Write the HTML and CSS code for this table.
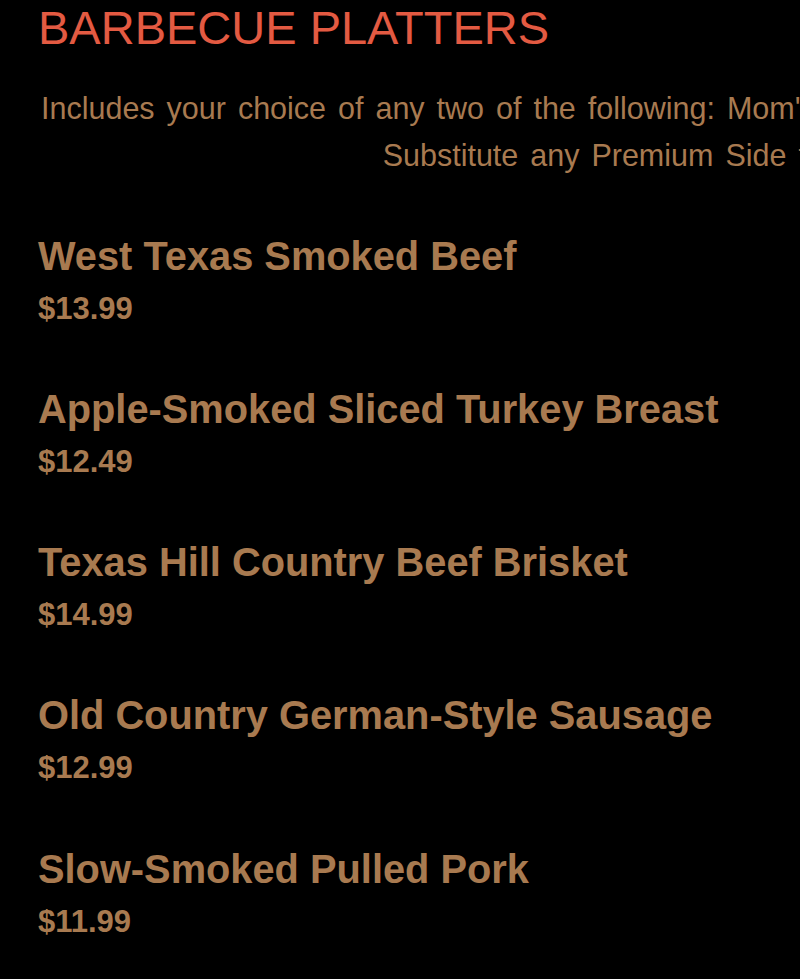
FILE: index.html
```html
<!DOCTYPE html>
<html lang="en">
<head>
<meta charset="utf-8">
<title>Barbecue Platters</title>
<link rel="stylesheet" href="styles.css">
</head>
<body>
<main class="menu">
  <h1 class="title">BARBECUE PLATTERS</h1>
  <p class="intro">Includes your choice of any two of the following: Mom's Potato Salad, Cole Slaw, Pinto Beans<br>Substitute any Premium Side for $1.99 more.</p>
  <section class="items">
    <div class="item">
      <h2 class="item-name">West Texas Smoked Beef</h2>
      <div class="item-price">$13.99</div>
    </div>
    <div class="item">
      <h2 class="item-name">Apple-Smoked Sliced Turkey Breast</h2>
      <div class="item-price">$12.49</div>
    </div>
    <div class="item">
      <h2 class="item-name">Texas Hill Country Beef Brisket</h2>
      <div class="item-price">$14.99</div>
    </div>
    <div class="item">
      <h2 class="item-name">Old Country German-Style Sausage</h2>
      <div class="item-price">$12.99</div>
    </div>
    <div class="item">
      <h2 class="item-name">Slow-Smoked Pulled Pork</h2>
      <div class="item-price">$11.99</div>
    </div>
  </section>
</main>
</body>
</html>
```

FILE: styles.css
```css
html, body {
  overflow: hidden;
}

body {
  margin: 0;
  background: #000;
  font-family: "Liberation Sans", Arial, sans-serif;
  color: #a87a50;
}

.menu {
  padding: 2.4px 38px 0;
}

.title {
  margin: 0;
  font-size: 47px;
  line-height: 52px;
  font-weight: normal;
  color: #e35a42;
}

.intro {
  margin: 30.2px 0 0 3px;
  width: max-content;
  white-space: nowrap;
  text-align: center;
  font-size: 30.5px;
  line-height: 47px;
  word-spacing: 3.5px;
}

.items {
  display: flex;
  flex-direction: column;
  gap: 58.3px;
  margin-top: 54px;
}

.item-name {
  margin: 0;
  font-size: 39.8px;
  line-height: 46px;
  font-weight: bold;
}

.item-price {
  margin-top: 11px;
  font-size: 31px;
  line-height: 38px;
  font-weight: bold;
}
```
